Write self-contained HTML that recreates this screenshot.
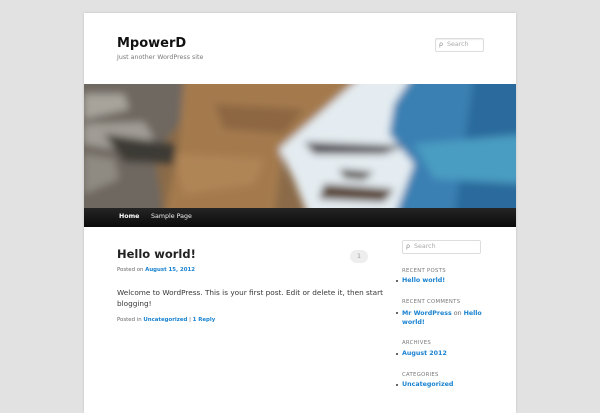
<!DOCTYPE html>
<html><head><style>
body{margin:0;width:600px;height:400px;background:#e2e2e2;font-family:"DejaVu Sans","Liberation Sans",sans-serif;overflow:hidden;position:relative}
#page{position:absolute;left:84px;top:13px;width:432px;height:400px;background:#fff;box-shadow:0 0 2px #bbb}
.a{position:absolute;white-space:nowrap}
.lnk{font-weight:bold;color:#1982d1}
.wt{font-size:5.3px;color:#777;letter-spacing:.3px}
.li{font-size:6.3px}
.li:before{content:"";position:absolute;left:-6px;top:3px;width:2px;height:2px;background:#666}
</style></head><body>
<div id="page">
<div class="a" style="left:33px;top:23px;font-size:13px;font-weight:bold;color:#111">MpowerD</div>
<div class="a" style="left:33px;top:41px;font-size:6.3px;color:#7a7a7a">Just another WordPress site</div>
<div class="a" style="left:351px;top:25px;width:47px;height:12px;border:1px solid #ddd;border-radius:2px;font-size:6.3px;color:#aaa;line-height:12px;text-indent:11px;box-shadow:inset 0 1px 1px #eee">Search<span style="position:absolute;left:-8px;top:0;color:#888">ρ</span></div>
<svg class="a" style="left:0;top:71px" width="432" height="124" viewBox="0 0 432 124">
<defs><filter id="b" x="-10%" y="-10%" width="120%" height="120%"><feGaussianBlur stdDeviation="4"/></filter></defs>
<rect width="432" height="124" fill="#8a6a48"/>
<g filter="url(#b)">
<polygon points="-10,-10 110,-10 95,40 70,70 80,134 -10,134" fill="#6e6860"/>
<polygon points="0,10 40,10 45,25 0,35" fill="#a8a49c"/>
<polygon points="0,40 60,38 70,55 30,65 0,60" fill="#a19d95"/>
<polygon points="0,70 30,75 35,95 0,110" fill="#8f8a82"/>
<polygon points="20,50 90,60 95,80 40,78" fill="#3e3a36"/>
<polygon points="100,-10 280,-10 240,30 200,60 190,134 80,134 95,60" fill="#a47a4d"/>
<polygon points="130,20 220,25 200,50 140,45" fill="#8d6643"/>
<polygon points="90,70 180,75 170,100 100,110" fill="#b08556"/>
<polygon points="280,-10 442,-10 442,134 225,134 210,95 195,65 235,30" fill="#e4ecf1"/>
<polygon points="330,-10 442,-10 442,134 310,134 330,80 305,50 310,20" fill="#3a80b2"/>
<polygon points="390,-10 442,-10 442,134 370,134 380,60" fill="#2c6a9c"/>
<polygon points="330,60 442,50 442,100 350,95" fill="#4a9cc2"/>
<polygon points="220,58 320,62 300,70 230,70" fill="#4a4448"/>
<polygon points="255,85 290,88 280,96 260,94" fill="#4a3c33"/>
<polygon points="240,100 310,105 300,118 235,115" fill="#5a4436"/>
</g>
</svg>
<div class="a" style="left:0;top:195px;width:432px;height:19px;background:linear-gradient(#252525,#0a0a0a)"></div>
<div class="a" style="left:35px;top:200px;font-size:6.3px;font-weight:bold;color:#fff">Home</div>
<div class="a" style="left:67px;top:200px;font-size:6.3px;color:#eee">Sample Page</div>
<div class="a" style="left:33px;top:234px;font-size:11.5px;font-weight:bold;color:#222">Hello world!</div>
<div class="a" style="left:266px;top:237px;width:18px;height:13px;border-radius:7px;background:#eee;font-size:6px;color:#999;text-align:center;line-height:13px">1</div>
<div class="a" style="left:33px;top:254px;font-size:5.4px;color:#666">Posted on <span class="lnk">August 15, 2012</span></div>
<div class="a" style="left:33px;top:274px;font-size:7.3px;color:#373737;line-height:11px">Welcome to WordPress. This is your first post. Edit or delete it, then start<br>blogging!</div>
<div class="a" style="left:33px;top:304px;font-size:5.4px;color:#666">Posted in <span class="lnk">Uncategorized</span> | <span class="lnk">1 Reply</span></div>
<div class="a" style="left:318px;top:227px;width:77px;height:12px;border:1px solid #ddd;border-radius:2px;font-size:6.3px;color:#aaa;line-height:12px;text-indent:11px">Search<span style="position:absolute;left:-8px;top:0;color:#888">ρ</span></div>
<div class="a wt" style="left:318px;top:255px">RECENT POSTS</div>
<div class="a li lnk" style="left:318px;top:264px">Hello world!</div>
<div class="a wt" style="left:318px;top:286px">RECENT COMMENTS</div>
<div class="a li" style="left:318px;top:296px;color:#666;line-height:9px"><span class="lnk">Mr WordPress</span> on <span class="lnk">Hello</span><br><span class="lnk">world!</span></div>
<div class="a wt" style="left:318px;top:327px">ARCHIVES</div>
<div class="a li lnk" style="left:318px;top:337px">August 2012</div>
<div class="a wt" style="left:318px;top:359px">CATEGORIES</div>
<div class="a li lnk" style="left:318px;top:368px">Uncategorized</div>
</div>
</body></html>
